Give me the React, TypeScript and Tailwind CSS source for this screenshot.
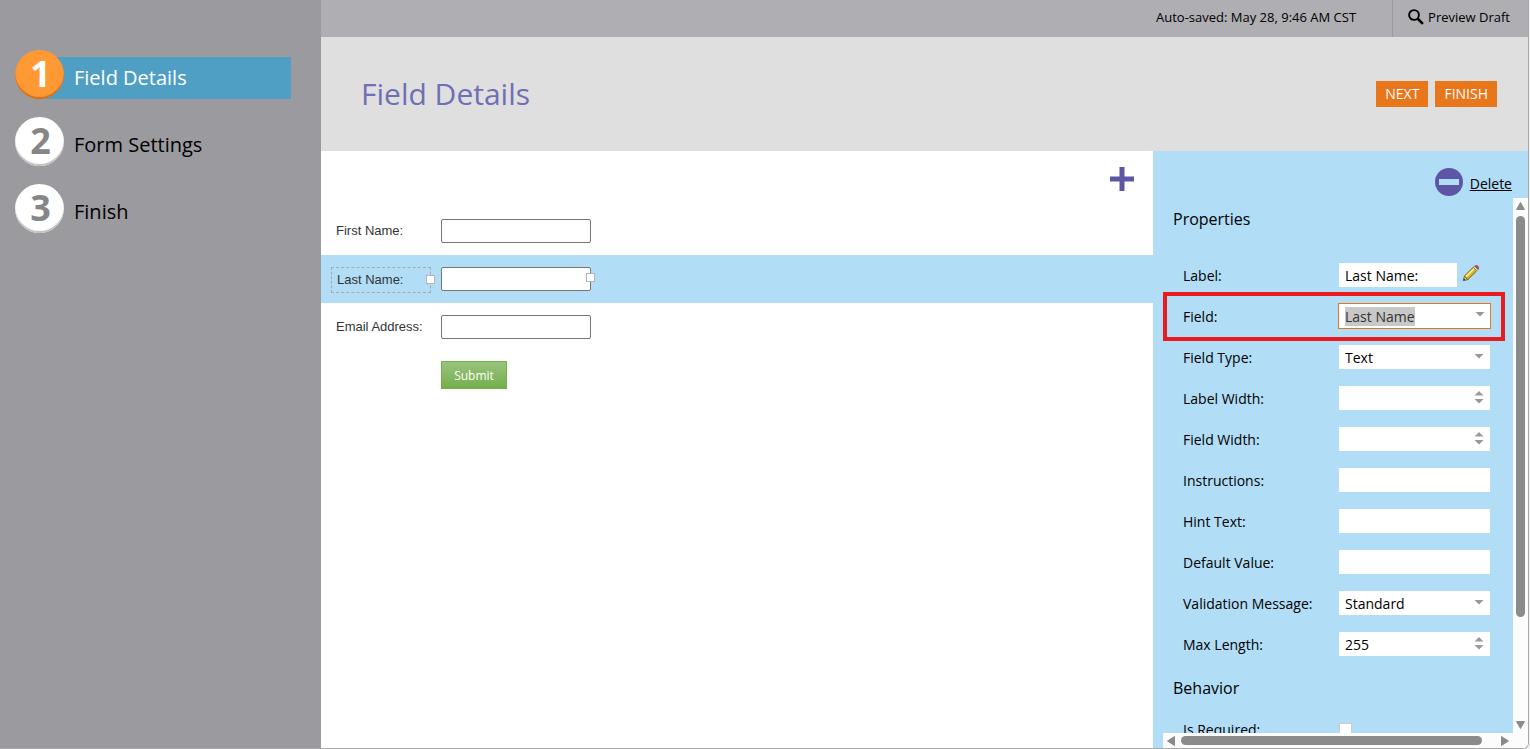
import { useState } from "react";

const steps = ["Field Details", "Form Settings", "Finish"];

function SearchIcon() {
  return (
    <svg width="16" height="16" viewBox="0 0 16 16" fill="none" stroke="#000" aria-hidden="true">
      <circle cx="6" cy="6" r="4.9" strokeWidth="1.9" />
      <path d="M9.5 9.5 L14.9 14.9" strokeWidth="2.5" />
    </svg>
  );
}

function PencilIcon() {
  return (
    <svg width="16" height="16" viewBox="0 0 16 16" aria-hidden="true">
      <path d="M0.4 15.6 L1.4 11.2 L4.8 14.6 Z" fill="#f0d9a8" stroke="#6b5a2c" strokeWidth="0.9" />
      <path d="M0.4 15.6 L0.9 13.4 L2.6 15.1 Z" fill="#222" />
      <path d="M1.4 11.2 L10.2 2.3 L13.7 5.8 L4.8 14.6 Z" fill="#dcb61f" stroke="#6f5c18" strokeWidth="1" />
      <path d="M3 11.6 L10.8 3.9" stroke="#fbf08a" strokeWidth="1.6" />
      <path d="M10.2 2.3 L11.6 0.9 L15 4.4 L13.7 5.8 Z" fill="#e4e4e4" stroke="#777" strokeWidth="0.7" />
      <path d="M11.8 1 Q13.4 -0.2 14.9 1.1 Q16.2 2.8 15 4.4 Z" fill="#d8503f" stroke="#8f3a30" strokeWidth="0.7" />
    </svg>
  );
}

function DownArrow() {
  return (
    <svg className="absolute top-[9px] right-1.5 pointer-events-none" width="10" height="5" viewBox="0 0 10 5" aria-hidden="true">
      <path d="M0.5 0 H9.5 L5 4.5 Z" fill="#999" />
    </svg>
  );
}

function Spinner() {
  return (
    <svg className="absolute top-[5px] right-1.5 pointer-events-none" width="10" height="13" viewBox="0 0 10 13" aria-hidden="true">
      <path d="M0.5 4.5 H9.5 L5 0 Z M0.5 8 H9.5 L5 12.5 Z" fill="#999" />
    </svg>
  );
}

type RowProps = {
  label: string;
  id: string;
  kind?: "text" | "select" | "spinner";
  value?: string;
};

function PropertyRow({ label, id, kind = "text", value = "" }: RowProps) {
  return (
    <div className="flex h-[41px] items-start pt-2">
      <label htmlFor={id} className="w-[156px] leading-[26px]">{label}</label>
      <div className="relative w-[151px]">
        {kind === "select" ? (
          <select id={id} className="block h-6 w-full appearance-none bg-white px-1.5 leading-[26px] outline-none">
            <option>{value}</option>
          </select>
        ) : (
          <input id={id} type="text" defaultValue={value} className="block h-6 w-full bg-white px-1.5 outline-none" />
        )}
        {kind === "select" && <DownArrow />}
        {kind === "spinner" && <Spinner />}
      </div>
    </div>
  );
}

function Handle({ className }: { className: string }) {
  return <span className={`absolute size-[9px] border border-[#b5b5b5] bg-white ${className}`} />;
}

function Sidebar({ active, onSelect }: { active: number; onSelect: (i: number) => void }) {
  return (
    <nav className="w-[321px] shrink-0 bg-[#9b9a9f] pt-[50px] pr-[30px] pl-[15px]">
      <ol className="flex flex-col gap-[18px]">
        {steps.map((step, i) => (
          <li key={step}>
            <button type="button" onClick={() => onSelect(i)} className="flex w-full text-left">
              <span
                className={
                  i === active
                    ? "z-10 flex size-[49px] shrink-0 items-center justify-center rounded-full bg-[#ff9933] pb-0.5 pl-0.5 text-4xl font-bold text-white inset-shadow-[0_-2px_1px_#cf6f1c]"
                    : "z-10 flex size-[49px] shrink-0 items-center justify-center rounded-full bg-white pb-0.5 pl-0.5 text-4xl font-bold text-[#868686] inset-shadow-[0_-2px_1px_#c0c0c0]"
                }
              >
                {i + 1}
              </span>
              <span
                className={
                  i === active
                    ? "-ml-[25px] h-[42px] flex-1 self-end bg-[#4f9fc4] pl-[35px] text-xl leading-[42px] text-white"
                    : "-ml-[25px] h-[42px] flex-1 self-end pl-[35px] text-xl leading-[42px] text-black"
                }
              >
                {step}
              </span>
            </button>
          </li>
        ))}
      </ol>
    </nav>
  );
}

function FormCanvas() {
  return (
    <section className="flex-1 bg-white">
      <div className="flex h-14 justify-end pt-4 pr-[19px]">
        <button type="button" aria-label="Add field" className="size-6">
          <svg width="24" height="24" viewBox="0 0 24 24" aria-hidden="true">
            <path d="M9.5 0 H14.5 V9.5 H24 V14.5 H14.5 V24 H9.5 V14.5 H0 V9.5 H9.5 Z" fill="#5d56a6" />
          </svg>
        </button>
      </div>
      <form className="font-['Liberation_Sans',Arial,sans-serif] text-[13px] text-[#333]" onSubmit={(e) => e.preventDefault()}>
        <div className="flex h-12 items-center pl-[15px]">
          <label htmlFor="first" className="w-[105px]">First Name:</label>
          <input id="first" className="h-6 w-[150px] rounded-xs border border-[#767676] bg-white px-1" />
        </div>
        <div className="flex h-12 items-start bg-[#b1ddf6] pt-3 pl-2.5">
          <div className="relative mr-2.5 h-[26px] w-[100px] border border-dashed border-[#aaa] pl-[5px]">
            <label htmlFor="last" className="leading-6">Last Name:</label>
            <Handle className="top-[7px] -right-[5px]" />
          </div>
          <div className="relative">
            <input id="last" className="block h-6 w-[150px] rounded-xs border border-[#767676] bg-white px-1" />
            <Handle className="top-1.5 -right-1" />
          </div>
        </div>
        <div className="flex h-12 items-center pl-[15px]">
          <label htmlFor="email" className="w-[105px]">Email Address:</label>
          <input id="email" className="h-6 w-[150px] rounded-xs border border-[#767676] bg-white px-1" />
        </div>
        <button
          type="submit"
          className="mt-2.5 ml-[120px] h-7 w-[66px] border border-[#75ae4c] bg-linear-to-b from-[#99c47c] to-[#75ae4c] pt-0.5 font-['Open_Sans',sans-serif] text-xs text-white"
        >
          Submit
        </button>
      </form>
    </section>
  );
}

function PropertiesPanel() {
  return (
    <aside className="flex w-[375px] shrink-0 flex-col bg-[#b1ddf6] pl-2.5 text-sm text-black">
      <div className="flex h-[47px] shrink-0 items-start justify-end pt-[17px] pr-4">
        <svg width="28" height="28" viewBox="0 0 28 28" aria-hidden="true">
          <circle cx="14" cy="14" r="14" fill="#5d56a6" />
          <rect x="4" y="11" width="20" height="6" fill="#b1ddf6" />
        </svg>
        <a href="#delete" className="ml-[7px] leading-8 underline">Delete</a>
      </div>

      <div className="flex min-h-0 flex-1">
        <div className="flex min-w-0 flex-1 flex-col">
          <div className="min-h-0 flex-1 overflow-hidden">
            <div className="pl-5">
              <h2 className="-ml-2.5 h-[57px] pt-[9px] text-base">Properties</h2>
              <div className="flex h-[41px] items-start pt-2">
                <label htmlFor="label" className="w-[156px] leading-[26px]">Label:</label>
                <input id="label" defaultValue="Last Name:" className="h-6 w-[118px] bg-white px-1.5 outline-none" />
                <button type="button" aria-label="Edit label" className="mt-0.5 ml-1.5"><PencilIcon /></button>
              </div>
              <div className="relative flex h-[41px] items-start pt-[7px]">
                <label htmlFor="field" className="w-[155px] leading-7">Field:</label>
                <div className="relative w-[153px]">
                  <input
                    id="field"
                    role="combobox"
                    aria-expanded="false"
                    autoFocus
                    onFocus={(e) => e.currentTarget.select()}
                    defaultValue="Last Name"
                    className="block h-[26px] w-full border border-[#e8761a] bg-white px-1.5 text-[#333] caret-transparent outline-none selection:bg-[#c8c8c8] selection:text-[#333]"
                  />
                  <DownArrow />
                </div>
                <div className="pointer-events-none absolute -top-1 right-2 -bottom-1 -left-5 border-4 border-[#e81b1e]" />
              </div>
              <PropertyRow label="Field Type:" id="type" kind="select" value="Text" />
              <PropertyRow label="Label Width:" id="label-width" kind="spinner" />
              <PropertyRow label="Field Width:" id="field-width" kind="spinner" />
              <PropertyRow label="Instructions:" id="instructions" />
              <PropertyRow label="Hint Text:" id="hint" />
              <PropertyRow label="Default Value:" id="default" />
              <PropertyRow label="Validation Message:" id="validation" kind="select" value="Standard" />
              <PropertyRow label="Max Length:" id="max" kind="spinner" value="255" />
              <h2 className="-ml-2.5 h-[52px] pt-[11px] text-base">Behavior</h2>
              <div className="flex h-[41px] items-start">
                <label htmlFor="required" className="w-[156px] leading-[26px]">Is Required:</label>
                <input id="required" type="checkbox" className="mt-1.5 size-[13px] appearance-none border border-[#ccc] bg-white" />
              </div>
            </div>
          </div>
          {/* horizontal scrollbar */}
          <div className="flex h-[15px] shrink-0 items-center gap-1.5 bg-[#fcfcfc] px-1" aria-hidden="true">
            <svg width="8" height="10" viewBox="0 0 8 10"><path d="M7.5 0.5 V9.5 L0.5 5 Z" fill="#8b8b8b" stroke="#8b8b8b" strokeLinejoin="round" /></svg>
            <div className="h-[9px] w-[301px] rounded-full bg-[#8b8b8b]" />
            <svg className="ml-auto" width="8" height="10" viewBox="0 0 8 10"><path d="M0.5 0.5 V9.5 L7.5 5 Z" fill="#8b8b8b" stroke="#8b8b8b" strokeLinejoin="round" /></svg>
          </div>
        </div>
        {/* vertical scrollbar */}
        <div className="mb-[15px] flex w-[15px] shrink-0 flex-col items-center gap-1.5 bg-[#fcfcfc] pt-1 pb-1 shadow-[0_15px_0_#fcfcfc]" aria-hidden="true">
          <svg width="9" height="8" viewBox="0 0 9 8"><path d="M0.5 7.5 H8.5 L4.5 0.5 Z" fill="#8b8b8b" stroke="#8b8b8b" strokeLinejoin="round" /></svg>
          <div className="h-[76%] w-[9px] rounded-full bg-[#8b8b8b]" />
          <svg className="mt-auto" width="9" height="8" viewBox="0 0 9 8"><path d="M0.5 0.5 H8.5 L4.5 7.5 Z" fill="#8b8b8b" stroke="#8b8b8b" strokeLinejoin="round" /></svg>
        </div>
      </div>
    </aside>
  );
}

export default function App() {
  const [active, setActive] = useState(0);

  return (
    <div className="h-screen bg-[#efefef] pr-px font-['Open_Sans',sans-serif]">
      <div className="flex h-full overflow-hidden rounded-br-md border-r border-b border-[#a9a9ab]">
        <Sidebar active={active} onSelect={setActive} />

        <main className="flex min-w-0 flex-1 flex-col">
          <div className="flex h-[37px] shrink-0 items-stretch justify-end bg-[#afaeb3] text-[13px] leading-[35px] text-black">
            <span className="pr-9">Auto-saved: May 28, 9:46 AM CST</span>
            <button type="button" className="flex items-start gap-1 border-l border-[#9b9a9f] pr-[18px] pl-[15px]">
              <span className="pt-[9px]"><SearchIcon /></span>
              <span>Preview Draft</span>
            </button>
          </div>

          <header className="flex h-[114px] shrink-0 items-center justify-between bg-[#dfdfdf] pr-[31px] pl-10">
            <h1 className="text-3xl text-[#706fb5]">{steps[active]}</h1>
            <div className="flex gap-[7px] text-sm text-white">
              <button type="button" className="h-[26px] bg-[#e8761a] px-[9px]">NEXT</button>
              <button type="button" className="h-[26px] bg-[#e8761a] px-[9px]">FINISH</button>
            </div>
          </header>

          <div className="flex min-h-0 flex-1">
            <FormCanvas />
            <PropertiesPanel />
          </div>
        </main>
      </div>
    </div>
  );
}
